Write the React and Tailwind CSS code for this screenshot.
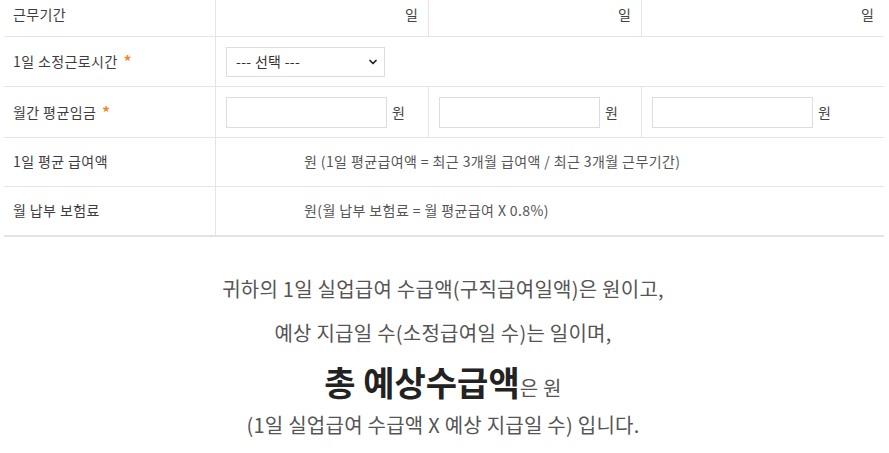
import { ChevronDown } from 'lucide-react';

const font = { fontFamily: '"Noto Sans CJK KR", "Noto Sans", sans-serif' };

function Label({ children, required, className = '' }) {
  return (
    <div className={`w-[212px] border-r border-[#e5e5e5] pl-[9px] flex items-center text-[14px] tracking-[0.4px] text-[#3d3d3d] ${className}`}>
      <span>{children}</span>
      {required && <span className="ml-[6px] text-[#f5841f] text-[15px] font-bold">*</span>}
    </div>
  );
}

function WonInput({ last }) {
  return (
    <div className={`flex items-center pl-[10px] ${last ? 'flex-1' : 'w-[213px] border-r border-[#e5e5e5]'}`}>
      <input type="text" className="w-[161px] h-[31px] border border-[#dddddd] bg-white outline-none" />
      <span className="ml-[5px] text-[14px] text-[#444]">원</span>
    </div>
  );
}

export default function App() {
  return (
    <div className="bg-white w-[889px] h-[453px] overflow-hidden" style={font}>
      <div className="ml-[4px] w-[880px] border-b-2 border-[#e3e3e3]">
        {/* 근무기간 */}
        <div className="flex h-[37px] border-b border-[#e5e5e5]">
          <Label className="pb-[8px]">근무기간</Label>
          <div className="w-[213px] border-r border-[#e5e5e5] flex items-center justify-end pr-[10px] pb-[8px] text-[14px] text-[#444]">일</div>
          <div className="w-[213px] border-r border-[#e5e5e5] flex items-center justify-end pr-[10px] pb-[8px] text-[14px] text-[#444]">일</div>
          <div className="flex-1 flex items-center justify-end pr-[10px] pb-[8px] text-[14px] text-[#444]">일</div>
        </div>

        {/* 1일 소정근로시간 */}
        <div className="flex h-[50px] border-b border-[#e5e5e5]">
          <Label required>1일 소정근로시간</Label>
          <div className="flex-1 flex items-center pl-[10px]">
            <div className="relative w-[159px] h-[30px]">
              <select className="appearance-none w-full h-full border border-[#dddddd] bg-white pl-[9px] text-[14px] tracking-[0.3px] text-[#333] outline-none">
                <option>--- 선택 ---</option>
              </select>
              <ChevronDown className="absolute right-[6px] top-[9px] w-[12px] h-[12px] text-[#222] pointer-events-none" strokeWidth={3.5} />
            </div>
          </div>
        </div>

        {/* 월간 평균임금 */}
        <div className="flex h-[51px] border-b border-[#e5e5e5]">
          <Label required>월간 평균임금</Label>
          <WonInput />
          <WonInput />
          <WonInput last />
        </div>

        {/* 1일 평균 급여액 */}
        <div className="flex h-[49px] border-b border-[#e5e5e5]">
          <Label className="pb-[2px]">1일 평균 급여액</Label>
          <div className="flex-1 flex items-center pl-[10px] pb-[2px] text-[14px] tracking-[0.4px] text-[#555]">
            <span className="inline-block w-[78px]"></span>
            <span>원 (1일 평균급여액 = 최근 3개월 급여액 / 최근 3개월 근무기간)</span>
          </div>
        </div>

        {/* 월 납부 보험료 */}
        <div className="flex h-[48px]">
          <Label className="pb-[2px]">월 납부 보험료</Label>
          <div className="flex-1 flex items-center pl-[10px] pb-[2px] text-[14px] tracking-[0.4px] text-[#555]">
            <span className="inline-block w-[78px]"></span>
            <span>원(월 납부 보험료 = 월 평균급여 X 0.8%)</span>
          </div>
        </div>
      </div>

      <div className="w-[886px] pt-[30px] text-center text-[20px] tracking-[0.25px] text-[#555]">
        <p className="leading-[44px]">귀하의 1일 실업급여 수급액(구직급여일액)은 원이고,</p>
        <p className="leading-[44px]">예상 지급일 수(소정급여일 수)는 일이며,</p>
        <p className="h-[48px] leading-[66px]">
          <strong className="text-[34px] leading-none font-bold tracking-normal text-[#222]">총 예상수급액</strong>은 원
        </p>
        <p className="leading-[44px]">(1일 실업급여 수급액 X 예상 지급일 수) 입니다.</p>
      </div>
    </div>
  );
}
